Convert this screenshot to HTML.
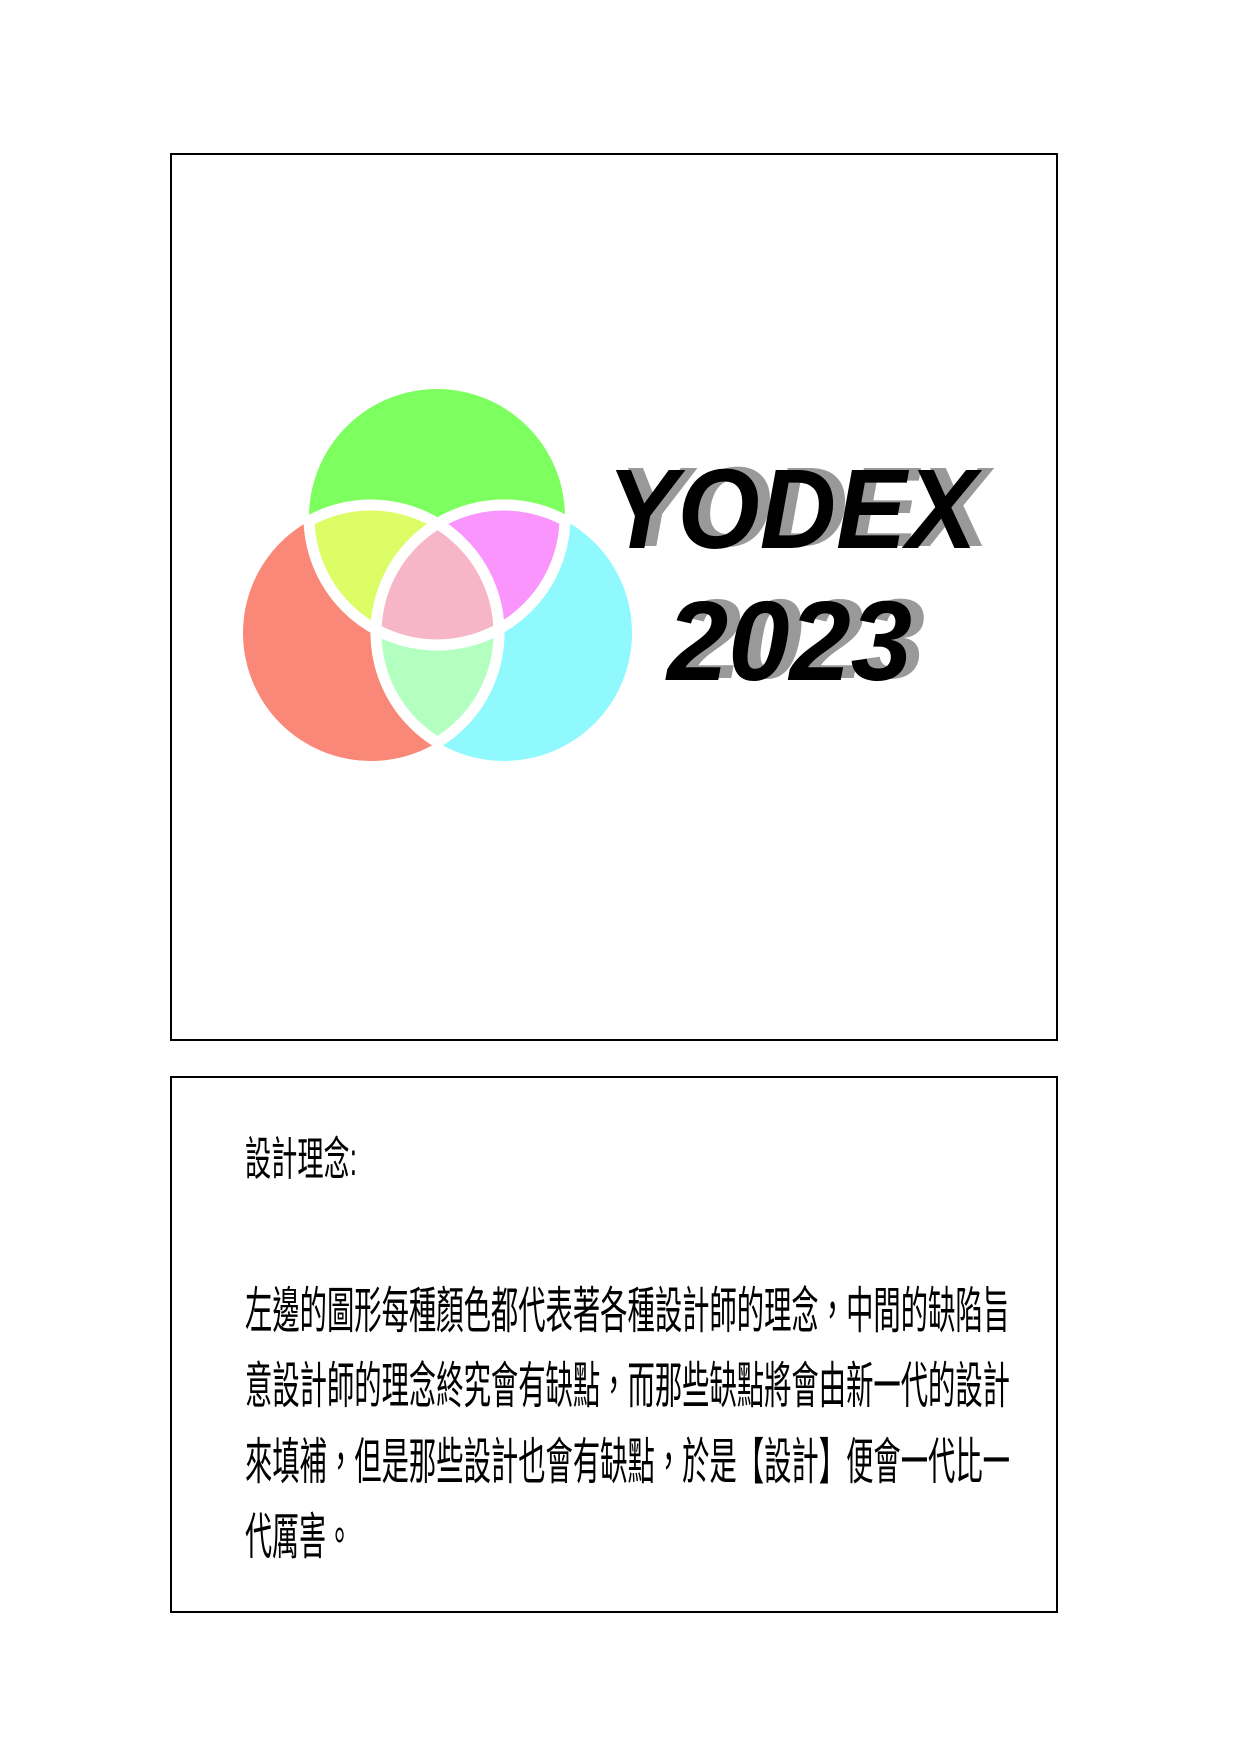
<!DOCTYPE html>
<html><head><meta charset="utf-8"><style>html,body{margin:0;padding:0;background:#fff}</style></head>
<body>
<svg width="1240" height="1754" viewBox="0 0 1240 1754" xmlns="http://www.w3.org/2000/svg">
<defs>
<clipPath id="cg"><circle cx="437" cy="517" r="128"/></clipPath>
<clipPath id="cr"><circle cx="371" cy="633" r="128"/></clipPath>
<clipPath id="cc"><circle cx="504" cy="633" r="128"/></clipPath>
</defs>
<rect x="171" y="154" width="886" height="886" fill="none" stroke="#000" stroke-width="2"/>
<rect x="171" y="1077" width="886" height="535" fill="none" stroke="#000" stroke-width="2"/>
<circle cx="437" cy="517" r="128" fill="#7dff5f"/>
<circle cx="371" cy="633" r="128" fill="#fa8878"/>
<circle cx="504" cy="633" r="128" fill="#8ff9fd"/>
<g clip-path="url(#cg)"><circle cx="371" cy="633" r="128" fill="#ddfd66"/><circle cx="504" cy="633" r="128" fill="#f995fd"/></g>
<g clip-path="url(#cr)"><circle cx="504" cy="633" r="128" fill="#b3ffc0"/></g>
<g clip-path="url(#cr)"><g clip-path="url(#cc)"><circle cx="437" cy="517" r="128" fill="#f7b6c8"/></g></g>
<g fill="none" stroke="#fff" stroke-width="11">
<g clip-path="url(#cg)"><circle cx="371" cy="633" r="128"/><circle cx="504" cy="633" r="128"/></g>
<g clip-path="url(#cr)"><circle cx="437" cy="517" r="128"/><circle cx="504" cy="633" r="128"/></g>
<g clip-path="url(#cc)"><circle cx="437" cy="517" r="128"/><circle cx="371" cy="633" r="128"/></g>
</g>
<g font-family="Liberation Sans, sans-serif" font-weight="bold" font-style="italic" font-size="113">
<text x="619" y="546" textLength="370" lengthAdjust="spacingAndGlyphs" fill="#999">YODEX</text>
<text x="607" y="548" textLength="370" lengthAdjust="spacingAndGlyphs" fill="#000">YODEX</text>
<text x="680" y="678" textLength="245" lengthAdjust="spacingAndGlyphs" fill="#999">2023</text>
<text x="667" y="680" textLength="245" lengthAdjust="spacingAndGlyphs" fill="#000">2023</text>
</g>
<g font-family="Liberation Sans, Noto Sans CJK TC, sans-serif" fill="#000">
<text x="245" y="1175" font-size="46" textLength="112" lengthAdjust="spacingAndGlyphs">設計理念:</text>
<text x="245" y="1328" font-size="50" textLength="765" lengthAdjust="spacingAndGlyphs">左邊的圖形每種顏色都代表著各種設計師的理念，中間的缺陷旨</text>
<text x="245" y="1403" font-size="50" textLength="765" lengthAdjust="spacingAndGlyphs">意設計師的理念終究會有缺點，而那些缺點將會由新一代的設計</text>
<text x="245" y="1479" font-size="50" textLength="765" lengthAdjust="spacingAndGlyphs">來填補，但是那些設計也會有缺點，於是【設計】便會一代比一</text>
<text x="245" y="1554" font-size="50" textLength="108" lengthAdjust="spacingAndGlyphs">代厲害。</text>
</g>
</svg>
</body></html>
